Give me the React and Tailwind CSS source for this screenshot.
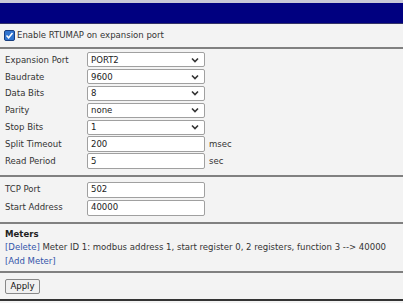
import React from "react";

const font = { fontFamily: '"DejaVu Sans Condensed", "DejaVu Sans", Verdana, sans-serif' };

function Sel({ value }) {
  return (
    <div className="w-[118px] h-[15px] bg-white border border-[#a0a0a0] rounded-[2px] flex items-center justify-between pl-[3px] pr-[5px]">
      <span className="text-[#222]">{value}</span>
      <svg width="8" height="6" viewBox="0 0 8 6"><path d="M1 1.5 L4 4.5 L7 1.5" stroke="#333" strokeWidth="1.6" fill="none" /></svg>
    </div>
  );
}

function Inp({ value }) {
  return (
    <div className="w-[118px] h-[16px] bg-white border border-[#a0a0a0] rounded-[2px] flex items-center pl-[3px]">
      <span className="text-[#222]">{value}</span>
    </div>
  );
}

function Row({ label, children, unit, h = "h-[16.8px]" }) {
  return (
    <div className={`flex items-center ${h}`}>
      <div className="w-[87px] pl-[5px]">{label}</div>
      {children}
      {unit && <span className="ml-[4px]">{unit}</span>}
    </div>
  );
}

export default function App() {
  return (
    <div className="w-[403px] h-[303px] bg-[#f3f3f3] text-[9.5px] text-[#333] overflow-hidden" style={font}>
      <div className="h-[3px] bg-[#c8c8d8]" />
      <div className="h-[21px] bg-[#000080] border-b border-[#333366]" />
      <div className="flex items-center h-[23px] pl-[4px]">
        <div className="w-[11px] h-[11px] bg-[#2f74d0] border border-[#1a3f80] rounded-[2px] flex items-center justify-center">
          <svg width="9" height="9" viewBox="0 0 9 9"><path d="M1.5 4.5 L3.6 6.8 L7.5 2" stroke="white" strokeWidth="1.5" fill="none" /></svg>
        </div>
        <span className="ml-[2px]">Enable RTUMAP on expansion port</span>
      </div>
      <div className="h-[2px] bg-[#808080]" />
      <div className="pt-[2.5px] pb-[6px]">
        <Row label="Expansion Port"><Sel value="PORT2" /></Row>
        <Row label="Baudrate"><Sel value="9600" /></Row>
        <Row label="Data Bits"><Sel value="8" /></Row>
        <Row label="Parity"><Sel value="none" /></Row>
        <Row label="Stop Bits"><Sel value="1" /></Row>
        <Row label="Split Timeout" unit="msec"><Inp value="200" /></Row>
        <Row label="Read Period" unit="sec"><Inp value="5" /></Row>
      </div>
      <div className="h-[2px] bg-[#808080]" />
      <div className="pt-[3.5px] pb-[5px]">
        <Row label="TCP Port" h="h-[18px]"><Inp value="502" /></Row>
        <Row label="Start Address" h="h-[18px]"><Inp value="40000" /></Row>
      </div>
      <div className="h-[2px] bg-[#808080]" />
      <div className="pl-[5px] pt-[3px] pb-[4px] leading-[13.5px]">
        <div className="font-bold text-[#222]">Meters</div>
        <div className="whitespace-nowrap"><span className="text-[#3355aa]">[Delete]</span> Meter ID 1: modbus address 1, start register 0, 2 registers, function 3 --&gt; 40000</div>
        <div className="text-[#3355aa]">[Add Meter]</div>
      </div>
      <div className="h-[2px] bg-[#808080]" />
      <div className="pl-[5px] pt-[6px]">
        <div className="w-[35px] h-[15px] border border-[#888] bg-[#f0f0f0] rounded-[2px] flex items-center justify-center text-[#111]">Apply</div>
      </div>
      <div className="mt-[5px] h-[2px] bg-[#333]" />
    </div>
  );
}
